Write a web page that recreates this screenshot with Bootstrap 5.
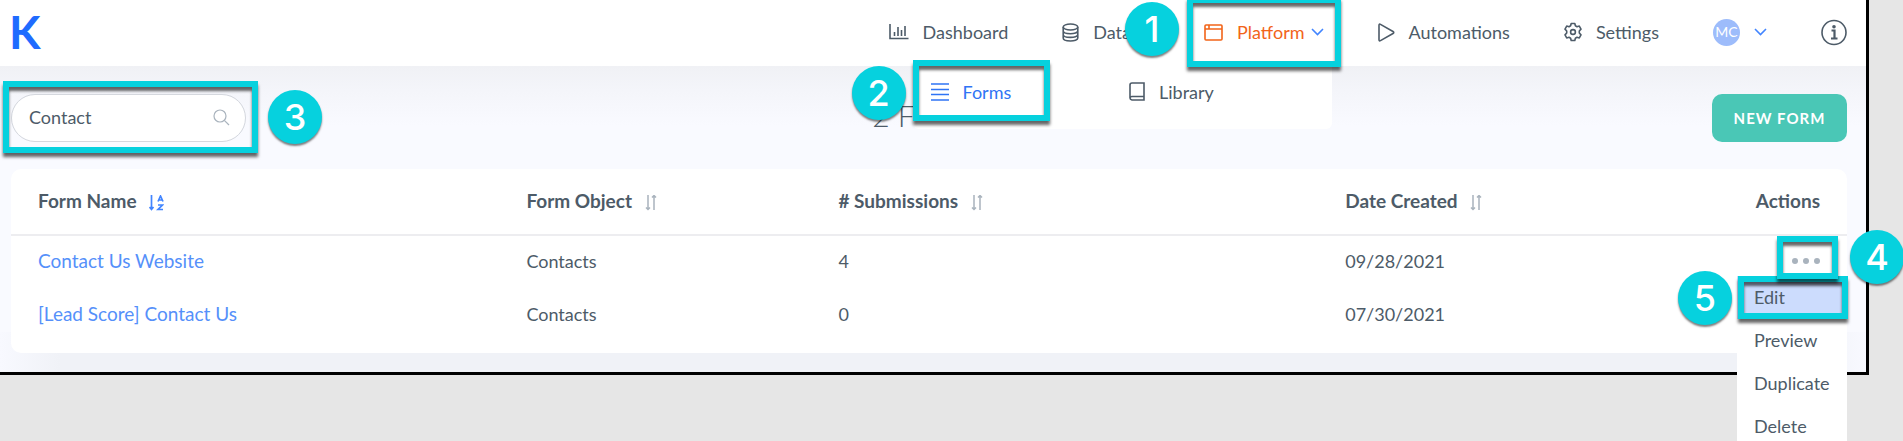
<!DOCTYPE html>
<html lang="en">
<head>
<meta charset="utf-8">
<meta name="viewport" content="width=device-width, initial-scale=1">
<title>Forms</title>
<link href="https://cdn.jsdelivr.net/npm/bootstrap@5.3.0/dist/css/bootstrap.min.css" rel="stylesheet">
<style>
  body { background: #e6e6e6; color: #4d5b68; font: 400 18px/24px Lato, sans-serif; overflow: hidden; min-height: 100vh; padding-right: 34px; }
  a { text-decoration: none; color: inherit; }
  svg { flex: none; fill: none; stroke: currentColor; }
  .menu-bar svg { stroke-width: 1.6; }
  .app-frame { border: 3px solid #000; border-width: 0 3px 3px 0; }
  .topbar { background: #fff; height: 66px; padding: 0 19px 2px 9px; z-index: 3; }
  .brand { color: #1f6bff; font-size: 46px; line-height: 46px; font-weight: 700; }
  .menu-bar { gap: 54px; }
  .menu-bar > li, .menu-bar .entry { display: flex; align-items: center; }
  .entry { gap: 14px; }
  .caret { color: #4285ff; margin-left: -8px; }
  .caret svg { display: block; }
  .orange { color: #f26419; }
  .blue { color: #2f74f5; }
  .avatar { width: 27px; height: 27px; background: #9dbcfb; color: #fff; font-size: 14px; }
  .submenu { position: absolute; right: -8px; top: 46px; width: 419px; height: 63px; background: #fff; border-radius: 0 0 6px 6px; padding: 0 20px 12px 18px; }
  .submenu .entry { flex: 1; }
  .workspace { padding: 28px 19px 19px 11px;
    background: linear-gradient(#f0f1f5, #f4f5fa 25px, #f9faff 60px) top / 100% 60px no-repeat,
      linear-gradient(90deg, #f8f9ff, #f0f2f7 60px, #f0f2f7 calc(100% - 60px), #f8f9ff) bottom / 100% 40px no-repeat, #f9faff; }
  .search-box { width: 235px; }
  .search-box input { height: 48px; border: 1px solid #d5d8de; color: #4d5b68; font-size: 18px; padding: 0 48px 2px 17px; }
  .search-box > button { position: absolute; right: 16px; top: 15px; color: #a9b3bd; line-height: 0; }
  .page-title { font-size: 30px; line-height: 36px; font-weight: 300; padding-bottom: 6px; }
  .new-btn { background: #4ac7b6; color: #fff; height: 48px; width: 135px; border-radius: 10px; font-size: 15px; font-weight: 700; letter-spacing: 1px; padding: 0; }
  .new-btn:hover { background: #3eb5a5; color: #fff; }
  .panel { margin-top: 27px; background: #fff; border-radius: 10px; padding-bottom: 12px; }
  .forms-table { table-layout: fixed; width: 100%; }
  .forms-table th, .forms-table td { padding: 0 27px 2px; }
  .forms-table th { height: 66px; font-size: 19px; font-weight: 700; border-bottom: 2px solid #ededf0; }
  .forms-table td { height: 53px; }
  .forms-table td:first-child { font-size: 19px; }
  .forms-table td a { color: #5590fa; }
  .w-name { width: 26.6%; } .w-object { width: 17%; } .w-count { width: 27.6%; }
  .sort { color: #a9b3bd; margin-left: 8px; line-height: 0; }
  .sort.active { color: #4285ff; }
  .sort svg { stroke-width: 1.5; }
  .plain { border: 0; background: none; padding: 0; }
  .dots { color: #a9b3bd; line-height: 0; }
  .row-menu { position: absolute; right: -27px; top: 18px; width: 110px; background: #fff; z-index: 1; }
  .row-menu a { display: block; line-height: 43px; padding-left: 17px; color: #4d5b68 !important; }
  .row-menu .selected { background: #ccdcfd; }
  /* Tutorial call-outs lie over the interface */
  .callout { position: absolute; border: 6px solid #06d1de; box-shadow: 0 4px 3px rgba(0,0,0,.6), inset 0 4px 3px rgba(0,0,0,.6); pointer-events: none; z-index: 4; }
  .step { position: absolute; width: 54px; height: 54px; border-radius: 50%; background: #06d1de; color: #fff; font: 500 36px/54px Inter, sans-serif; text-align: center; box-shadow: 0 2px 2px rgba(0,0,0,.5); z-index: 5; }
  .c-platform { inset: -23px -17px -23px -17px; } .s-platform { left: -79px; top: -18px; }
  .c-forms { left: 0; top: -6px; width: 137px; height: 61px; } .s-forms { left: -61px; top: 0; }
  .c-search { inset: -13px -12px -11px -8px; } .s-search { left: 257px; top: -4px; }
  .c-dots { inset: -22px -18px -15px -15px; } .s-dots { right: -84px; top: -28px; }
  .c-edit { inset: 0 -1px 0 1px; } .s-edit { left: -59px; top: -5px; }
</style>
</head>
<body>
<div class="app-frame">
  <nav class="topbar position-relative d-flex align-items-center justify-content-between" aria-label="Main">
    <a class="brand" href="#">K</a>
    <ul class="menu-bar list-unstyled d-flex align-items-center mb-0">
      <li><a class="entry" href="#"><svg width="20" height="16" viewBox="0 0 20 16"><path d="M1 0v14.5h18.500M5.500 8v4M9 3v9M12.500 6v6M16 2v10"/></svg>Dashboard</a></li>
      <li><a class="entry" href="#"><svg width="17" height="19" viewBox="0 0 17 19"><ellipse cx="8.500" cy="4" rx="7.300" ry="3"/><path d="M1.200 4v11c0 4 14.600 4 14.600 0V4M1.200 7.700c0 4 14.600 4 14.600 0M1.200 11.400c0 4 14.600 4 14.600 0"/></svg>Data<span class="caret"><svg width="13" height="8" viewBox="0 0 13 8"><path d="M1 1l5.500 5.500L12 1"/></svg></span></a></li>
      <li class="position-relative">
        <a class="entry orange" href="#" aria-expanded="true"><svg width="19" height="17" viewBox="0 0 19 17"><rect x="1" y="1" width="17" height="15" rx="1"/><path d="M1 5h17M5 1v4"/></svg>Platform<span class="caret"><svg width="13" height="8" viewBox="0 0 13 8"><path d="M1 1l5.500 5.500L12 1"/></svg></span></a>
        <span class="callout c-platform"></span><span class="step s-platform">1</span>
        <div class="submenu d-flex align-items-center">
          <a class="entry blue" href="#"><svg width="18" height="18" viewBox="0 0 18 18"><path d="M0 1h18M0 6.500h18M0 11.500h18M0 17h18"/></svg>Forms</a>
          <a class="entry" href="#"><svg class="ms-2" width="16" height="19" viewBox="0 0 16 19"><path d="M15 14.500V1H3Q1 1 1 3v13M15 14.500H3Q1 14.500 1 16t2 2h12z"/></svg>Library</a>
          <span class="callout c-forms"></span><span class="step s-forms">2</span>
        </div>
      </li>
      <li><a class="entry" href="#"><svg width="17" height="19" viewBox="0 0 17 19"><path d="M1 2.200Q1 .6 2.500 1.400L15 8.500q1.500 1 0 2L2.500 17.600Q1 18.400 1 16.800z"/></svg>Automations</a></li>
      <li><a class="entry" href="#"><svg width="18" height="20" viewBox="0 0 18 20"><path d="M7.200 1.500h3.600l.6 2.300 1.600.9 2.300-.6 1.700 3L15.300 9v2l1.700 1.900-1.700 3-2.300-.6-1.600.9-.6 2.300H7.200l-.6-2.300-1.600-.9-2.300.6-1.700-3L2.700 11V9L1 7.100l1.700-3 2.300.6 1.600-.9z" stroke-linejoin="round"/><circle cx="9" cy="10" r="2.400"/></svg>Settings</a></li>
      <li><a class="entry" href="#"><span class="avatar rounded-circle d-flex align-items-center justify-content-center">MC</span><span class="caret ms-0"><svg width="13" height="8" viewBox="0 0 13 8"><path d="M1 1l5.500 5.500L12 1"/></svg></span></a></li>
      <li><a class="entry" href="#" aria-label="Information"><svg width="26" height="27" viewBox="0 0 26 27"><circle cx="13" cy="13.500" r="12"/><circle cx="13" cy="7.800" r="1.800" fill="currentColor" stroke="none"/><path d="M10.500 11.500H13.500V19.500M10 19.500h6.500" stroke-width="2.200"/></svg></a></li>
    </ul>
  </nav>

  <main class="workspace">
    <div class="row g-0 align-items-center">
      <div class="col">
        <form class="search-box position-relative" role="search">
          <input class="form-control rounded-pill" type="text" value="Contact" aria-label="Search forms">
          <button class="plain" type="button" aria-label="Search"><svg width="17" height="17" viewBox="0 0 17 17" stroke-width="1.200"><circle cx="7" cy="7" r="6"/><path d="M11.300 11.300L16 16"/></svg></button>
          <span class="callout c-search"></span><span class="step s-search">3</span>
        </form>
      </div>
      <h1 class="page-title col-auto mb-0 pe-2">2 Forms</h1>
      <div class="col text-end"><button class="btn new-btn" type="button">NEW FORM</button></div>
    </div>

    <section class="panel">
      <table class="forms-table">
        <thead>
          <tr>
            <th class="w-name" scope="col">Form Name <button class="plain sort active" type="button" aria-label="Sort by form name"><svg width="15" height="16" viewBox="0 0 15 16"><path d="M2.500 0v14M.5 12l2 2.500 2-2.500M9 6.500L11.500 1 14 6.500M9.800 5h3.400M9 10h4.500L9 14.500h5" stroke-width="1.700"/></svg></button></th>
            <th class="w-object" scope="col">Form Object <button class="plain sort" type="button" aria-label="Sort by form object"><svg width="12" height="16" viewBox="0 0 12 16"><path d="M3 0v14M1 12.500l2 2 2-2M9 15V1M7 2.500l2-2 2 2"/></svg></button></th>
            <th class="w-count" scope="col"># Submissions <button class="plain sort" type="button" aria-label="Sort by submissions"><svg width="12" height="16" viewBox="0 0 12 16"><path d="M3 0v14M1 12.500l2 2 2-2M9 15V1M7 2.500l2-2 2 2"/></svg></button></th>
            <th scope="col">Date Created <button class="plain sort" type="button" aria-label="Sort by date"><svg width="12" height="16" viewBox="0 0 12 16"><path d="M3 0v14M1 12.500l2 2 2-2M9 15V1M7 2.500l2-2 2 2"/></svg></button><span class="float-end">Actions</span></th>
          </tr>
        </thead>
        <tbody>
          <tr>
            <td><a href="#">Contact Us Website</a></td><td>Contacts</td><td>4</td>
            <td><div class="d-flex justify-content-between align-items-center"><span>09/28/2021</span>
              <div class="position-relative">
                <button class="plain dots d-block" type="button" aria-label="Row actions"><svg width="28" height="6" viewBox="0 0 28 6"><g fill="currentColor" stroke="none"><circle cx="3" cy="3" r="3"/><circle cx="14" cy="3" r="3"/><circle cx="25" cy="3" r="3"/></g></svg></button>
                <span class="callout c-dots"></span><span class="step s-dots">4</span>
                <div class="row-menu">
                  <div class="position-relative"><a class="selected" href="#">Edit</a><span class="callout c-edit"></span><span class="step s-edit">5</span></div>
                  <a href="#">Preview</a><a href="#">Duplicate</a><a href="#">Delete</a>
                </div>
              </div></div></td>
          </tr>
          <tr><td><a href="#">[Lead Score] Contact Us</a></td><td>Contacts</td><td>0</td><td>07/30/2021</td></tr>
        </tbody>
      </table>
    </section>
  </main>
</div>
<script src="https://cdn.jsdelivr.net/npm/bootstrap@5.3.0/dist/js/bootstrap.bundle.min.js"></script>
</body>
</html>
